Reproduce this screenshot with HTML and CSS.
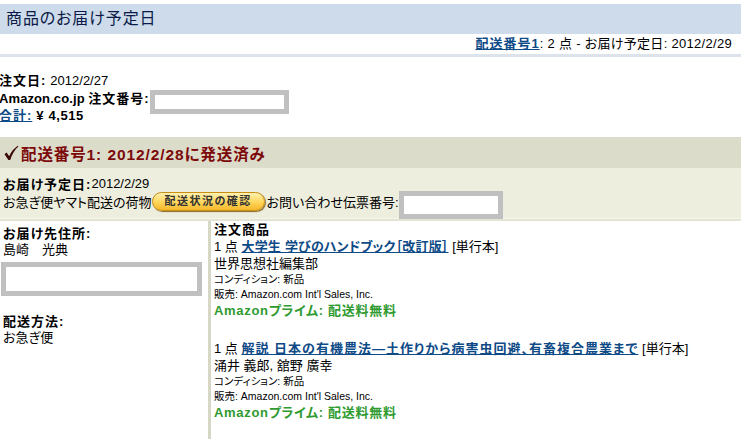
FILE: index.html
```html
<!DOCTYPE html>
<html lang="ja">
<head>
<meta charset="utf-8">
<title>商品のお届け予定日</title>
<link rel="stylesheet" href="styles.css">
</head>
<body>
<div class="title-bar"><h1 class="title">商品のお届け予定日</h1></div>
<div class="ship-summary"><a class="link strong" href="#">配送番号1</a>: 2 点 - お届け予定日: 2012/2/29</div>
<div class="strip"></div>

<div class="order-info">
  <div class="info-line"><span class="label">注文日:</span> <span class="val">2012/2/27</span></div>
  <div class="info-line info-box-line"><span class="label latin">Amazon.co.jp</span>&nbsp;<span class="label">注文番号:</span><span class="blank order-blank"></span></div>
  <div class="info-line"><a class="link label" href="#">合計:</a> <span class="label total">¥ 4,515</span></div>
</div>

<div class="shipment">
  <div class="ship-head">
    <svg class="check" width="16" height="16" viewBox="0 0 16 16"><path d="M1.5 9.2 L3.6 7.6 L6.2 11.2 C8.2 7 10.8 3.4 14.8 0.8 L15.4 1.6 C11.8 4.8 9.2 9 7.2 15 L5.4 15 Z" fill="#3a0808"/></svg>
    <span>配送番号1: 2012/2/28に発送済み</span>
  </div>
  <div class="ship-body">
    <div class="body-line"><span class="label">お届け予定日:</span><span class="val">2012/2/29</span></div>
    <div class="body-line track-line">
      <span>お急ぎ便ヤマト配送の荷物</span>
      <span class="track-btn">配送状況の確認</span>
      <span>お問い合わせ伝票番号:</span>
      <span class="blank slip-blank"></span>
    </div>
  </div>
  <div class="detail">
    <div class="col-left">
      <div class="label line16">お届け先住所:</div>
      <div class="line16">島崎　光典</div>
      <div class="blank addr-blank"></div>
      <div class="label line16 method">配送方法:</div>
      <div class="line16">お急ぎ便</div>
    </div>
    <div class="col-right">
      <div class="label line16">注文商品</div>
      <div class="item">
        <div class="item-title">1 点 <a class="link strong t1" href="#">大学生 学びのハンドブック［改訂版］</a> [単行本]</div>
        <div class="item-title">世界思想社編集部</div>
        <div class="small">コンディション: 新品</div>
        <div class="small">販売: Amazon.com Int'l Sales, Inc.</div>
        <div class="prime">Amazonプライム: 配送料無料</div>
      </div>
      <div class="item item2">
        <div class="item-title">1 点 <a class="link strong t2" href="#">解説 日本の有機農法―土作りから病害虫回避、有畜複合農業まで</a> [単行本]</div>
        <div class="item-title">涌井 義郎, 舘野 廣幸</div>
        <div class="small">コンディション: 新品</div>
        <div class="small">販売: Amazon.com Int'l Sales, Inc.</div>
        <div class="prime">Amazonプライム: 配送料無料</div>
      </div>
    </div>
  </div>
</div>
</body>
</html>
```

FILE: styles.css
```css
html, body {
  margin: 0;
  padding: 0;
  background: #ffffff;
}
body {
  padding-top: 4px;
  width: 741px;
  overflow: hidden;
  font-family: "Liberation Sans", "Noto Sans CJK JP", sans-serif;
  font-feature-settings: "palt";
  font-size: 13px;
  color: #000;
}
.title-bar {
  height: 30px;
  background: #cddbea;
  padding-left: 6px;
}
.title {
  margin: 0;
  font-size: 16px;
  font-weight: normal;
  line-height: 30px;
  letter-spacing: 0.9px;
  color: #0b1a48;
}
.ship-summary {
  height: 20px;
  line-height: 20px;
  text-align: right;
  padding-right: 9px;
  font-size: 13px;
  letter-spacing: 0.3px;
}
.link {
  color: #0d4a86;
  text-decoration: underline;
}
.strong {
  font-weight: bold;
  letter-spacing: 1px;
}
.strip {
  height: 3px;
  background: #dde3ea;
}
.order-info {
  margin: 15px 0 13px -1px;
}
.info-line {
  height: 17px;
  line-height: 17px;
  display: flex;
  align-items: center;
  gap: 4px;
}
.info-box-line {
  height: 18px;
  gap: 0;
}
.label {
  font-weight: bold;
  letter-spacing: 1px;
}
.label.latin { letter-spacing: 0.1px; }
.total { letter-spacing: 0.6px; }
.val { font-size: 13px; }
.blank {
  display: block;
  box-sizing: border-box;
  border: 5px solid #c0c0c0;
  background: #fff;
  flex: none;
}
.order-blank {
  width: 139px;
  height: 24px;
  margin-left: 0;
  margin-top: 4px;
  margin-bottom: -4px;
}
.ship-head {
  height: 31px;
  background: #dcdcca;
  display: flex;
  align-items: center;
  gap: 2px;
  padding-left: 3px;
  color: #7d0a0a;
  font-size: 15.5px;
  font-weight: bold;
  letter-spacing: 0.9px;
}
.check { flex: none; margin-top: 1px; }
.ship-body {
  background: #eeeede;
  padding: 7px 0 8px 3px;
  border-bottom: 1px solid #f6f6ee;
}
.body-line {
  height: 17px;
  display: flex;
  align-items: center;
}
.track-line {
  height: 18px;
}
.track-btn {
  box-sizing: border-box;
  height: 19px;
  width: 113px;
  margin: 0 2px 0 0;
  border: 1px solid #c88d12;
  border-radius: 10px;
  background: linear-gradient(#fff1b0, #ffd55a 55%, #f5b82c);
  box-shadow: 1px 1px 1px #8a6a2a;
  color: #333;
  font-size: 11px;
  font-weight: bold;
  letter-spacing: 1.5px;
  text-align: center;
  line-height: 17px;
}
.slip-blank {
  width: 104px;
  height: 28px;
  margin-left: 0;
  margin-top: 4px;
  margin-bottom: -4px;
}
.detail {
  display: grid;
  grid-template-columns: 208px 1fr;
  border-top: 2px solid #e4e4d4;
  height: 230px;
}
.col-left {
  padding: 5px 0 0 3px;
}
.line16 {
  line-height: 16px;
  height: 16px;
}
.addr-blank {
  width: 201px;
  height: 34px;
  margin: 4px 0 0 -2px;
}
.method {
  margin-top: 18px;
}
.col-right {
  border-left: 3px solid #d7d7c5;
  padding: 1px 0 0 3px;
}
.item-title {
  height: 17px;
  line-height: 17px;
  white-space: nowrap;
}
.t1 { letter-spacing: 0.2px; }
.t2 { letter-spacing: 1px; }
.small {
  font-size: 10.5px;
  height: 14.5px;
  line-height: 14.5px;
}
.prime {
  color: #2f9a2f;
  font-weight: bold;
  letter-spacing: 0.7px;
  height: 19px;
  line-height: 19px;
}
.item2 {
  margin-top: 20px;
}
```
